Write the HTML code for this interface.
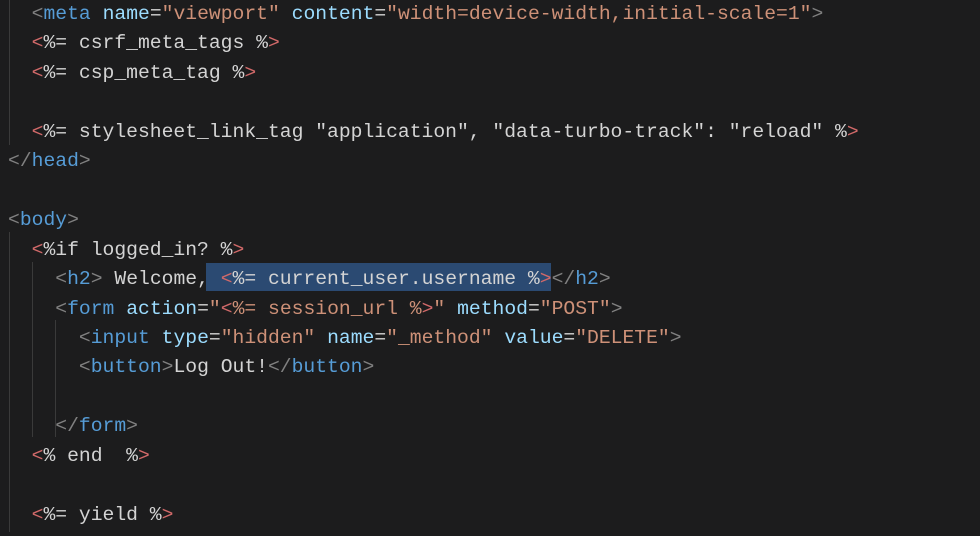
<!DOCTYPE html>
<html><head><style>
body{margin:0;width:980px;height:536px;background:#1c1c1d;overflow:hidden;position:relative}
pre{margin:0;position:absolute;left:8px;top:0px;font:19.7px/29.45px "Liberation Mono",monospace;color:#d4d4d4;letter-spacing:0}
.b{color:#808080}.t{color:#569cd6}.a{color:#9cdcfe}.s{color:#ce9178}.e{color:#d16969}.r{color:#d4d4d4}
.sel{position:absolute;left:206px;top:263px;width:345px;height:28px;background:#2b4a72}
.g{position:absolute;width:1px;background:#3a3a3a}
</style></head><body>
<div class="sel"></div>
<div class="g" style="left:9px;top:0;height:145px"></div>
<div class="g" style="left:9px;top:232px;height:300px"></div>
<div class="g" style="left:32px;top:262px;height:175px"></div>
<div class="g" style="left:55px;top:320px;height:117px"></div>
<pre>  <span class="b">&lt;</span><span class="t">meta</span> <span class="a">name</span>=<span class="s">"viewport"</span> <span class="a">content</span>=<span class="s">"width=device-width,initial-scale=1"</span><span class="b">&gt;</span>
  <span class="e">&lt;</span>%= csrf_meta_tags %<span class="e">&gt;</span>
  <span class="e">&lt;</span>%= csp_meta_tag %<span class="e">&gt;</span>

  <span class="e">&lt;</span>%= stylesheet_link_tag "application", "data-turbo-track": "reload" %<span class="e">&gt;</span>
<span class="b">&lt;/</span><span class="t">head</span><span class="b">&gt;</span>

<span class="b">&lt;</span><span class="t">body</span><span class="b">&gt;</span>
  <span class="e">&lt;</span>%if logged_in? %<span class="e">&gt;</span>
    <span class="b">&lt;</span><span class="t">h2</span><span class="b">&gt;</span> Welcome, <span class="e">&lt;</span>%= current_user.username %<span class="e">&gt;</span><span class="b">&lt;/</span><span class="t">h2</span><span class="b">&gt;</span>
    <span class="b">&lt;</span><span class="t">form</span> <span class="a">action</span>=<span class="s">"</span><span class="e">&lt;</span><span class="s">%= session_url %</span><span class="e">&gt;</span><span class="s">"</span> <span class="a">method</span>=<span class="s">"POST"</span><span class="b">&gt;</span>
      <span class="b">&lt;</span><span class="t">input</span> <span class="a">type</span>=<span class="s">"hidden"</span> <span class="a">name</span>=<span class="s">"_method"</span> <span class="a">value</span>=<span class="s">"DELETE"</span><span class="b">&gt;</span>
      <span class="b">&lt;</span><span class="t">button</span><span class="b">&gt;</span>Log Out!<span class="b">&lt;/</span><span class="t">button</span><span class="b">&gt;</span>

    <span class="b">&lt;/</span><span class="t">form</span><span class="b">&gt;</span>
  <span class="e">&lt;</span>% end  %<span class="e">&gt;</span>

  <span class="e">&lt;</span>%= yield %<span class="e">&gt;</span>
</pre>
</body></html>
